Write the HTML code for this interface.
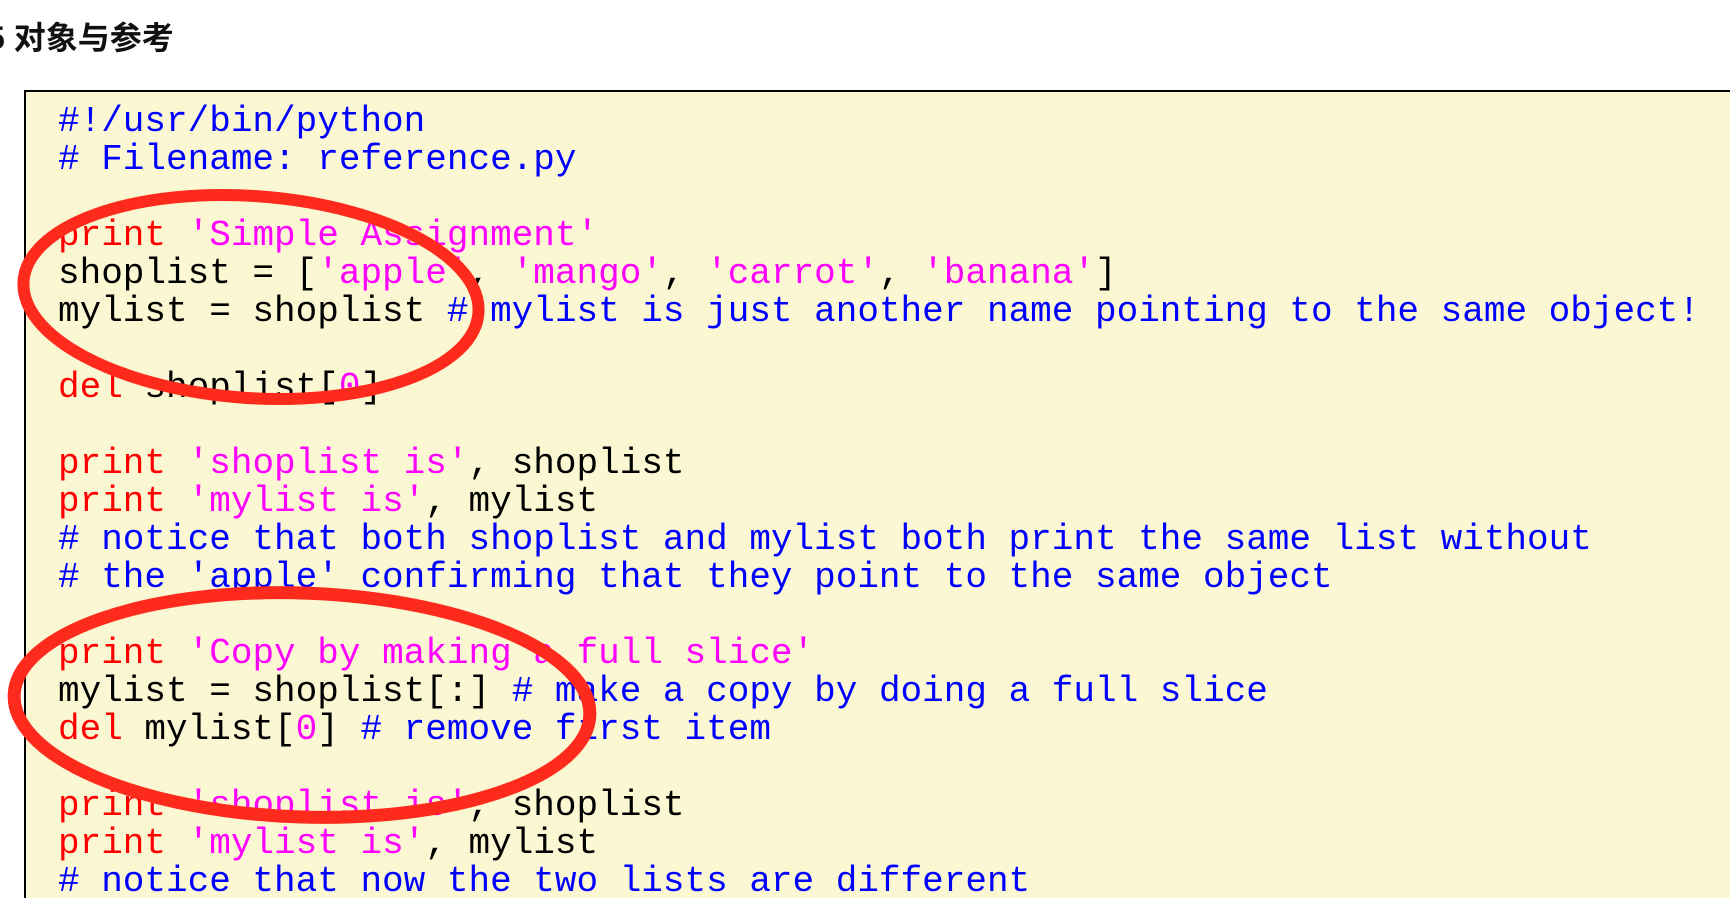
<!DOCTYPE html>
<html><head><meta charset="utf-8"><style>
html,body{margin:0;padding:0;background:#fff;width:1730px;height:898px;overflow:hidden;position:relative}
h2{position:absolute;left:-13px;top:17px;margin:0;font:bold 32px "Liberation Sans","Noto Sans CJK SC",sans-serif;color:#111;line-height:42px;white-space:nowrap}
.box{position:absolute;left:24px;top:90px;width:1720px;height:820px;background:#fbf7d3;border-left:2px solid #000;border-top:2px solid #000}
pre{position:absolute;left:58px;top:103px;margin:0;font-family:"Liberation Mono",monospace;font-size:36px;line-height:38px;color:#000}
.b{color:#0000ff}.r{color:#ff0000}.m{color:#ff00ff}
svg{position:absolute;left:0;top:0}
</style></head><body>
<h2>5 对象与参考</h2>
<div class="box"></div>
<pre><span class="b">#!/usr/bin/python</span>
<span class="b"># Filename: reference.py</span>

<span class="r">print</span> <span class="m">'Simple Assignment'</span>
shoplist = [<span class="m">'apple'</span>, <span class="m">'mango'</span>, <span class="m">'carrot'</span>, <span class="m">'banana'</span>]
mylist = shoplist <span class="b"># mylist is just another name pointing to the same object!</span>

<span class="r">del</span> shoplist[<span class="m">0</span>]

<span class="r">print</span> <span class="m">'shoplist is'</span>, shoplist
<span class="r">print</span> <span class="m">'mylist is'</span>, mylist
<span class="b"># notice that both shoplist and mylist both print the same list without</span>
<span class="b"># the 'apple' confirming that they point to the same object</span>

<span class="r">print</span> <span class="m">'Copy by making a full slice'</span>
mylist = shoplist[:] <span class="b"># make a copy by doing a full slice</span>
<span class="r">del</span> mylist[<span class="m">0</span>] <span class="b"># remove first item</span>

<span class="r">print</span> <span class="m">'shoplist is'</span>, shoplist
<span class="r">print</span> <span class="m">'mylist is'</span>, mylist
<span class="b"># notice that now the two lists are different</span></pre>
<svg width="1730" height="898" viewBox="0 0 1730 898">
<ellipse cx="251" cy="297" rx="228" ry="101" fill="none" stroke="#fe2a1c" stroke-width="12" transform="rotate(4 251 297)"/>
<ellipse cx="302" cy="705" rx="288" ry="112" fill="none" stroke="#fe2a1c" stroke-width="13" transform="rotate(2 302 705)"/>
</svg>
</body></html>
